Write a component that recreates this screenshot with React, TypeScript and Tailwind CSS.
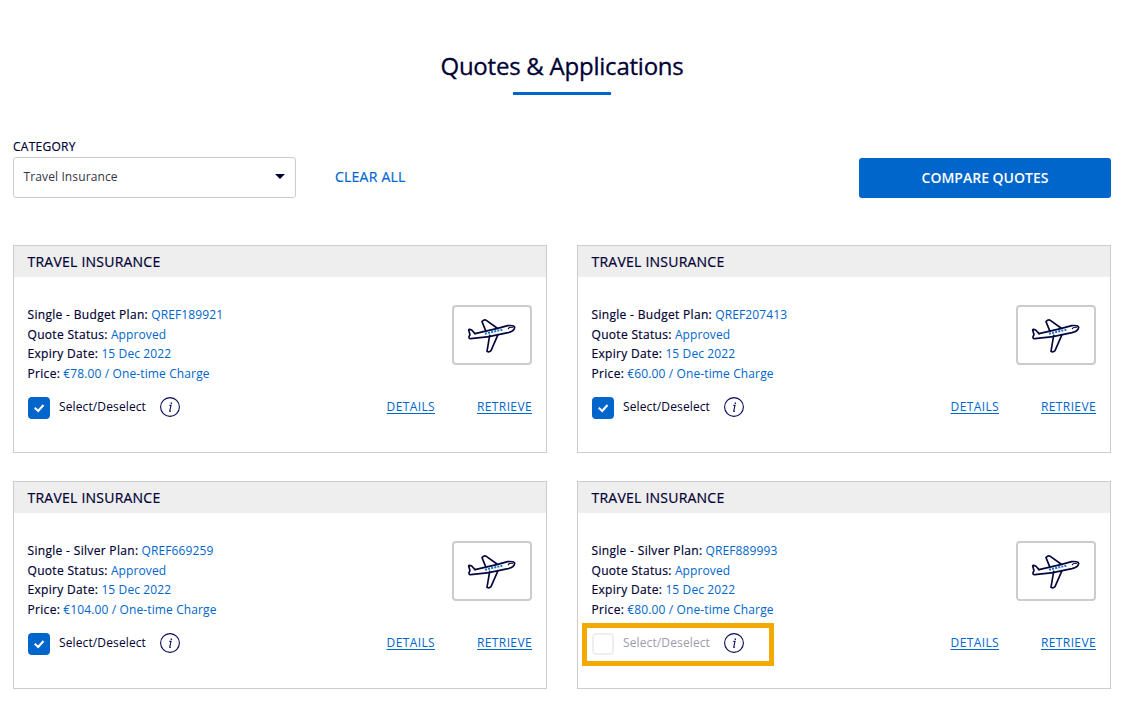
type Quote = { plan: string; reference: string; price: string; selected: boolean };

const quotes: Quote[] = [
  { plan: "Single - Budget Plan:", reference: "QREF189921", price: "€78.00", selected: true },
  { plan: "Single - Budget Plan:", reference: "QREF207413", price: "€60.00", selected: true },
  { plan: "Single - Silver Plan:", reference: "QREF669259", price: "€104.00", selected: true },
  { plan: "Single - Silver Plan:", reference: "QREF889993", price: "€80.00", selected: false },
];

function PlaneIcon() {
  return (
    <svg width="50" height="38" viewBox="66 51 150 114" className="mt-0.5" fill="none" stroke="#06063c" strokeWidth="5" strokeLinecap="round" strokeLinejoin="round">
      <path d="M90 101 L80 90 Q72 86 71 90 L75 104 L72 110 Q71 117 77 116 L133 110" />
      <path d="M90 101 L155 86 L188 77 Q207 75 209 82 Q208 93 189 98 L135 109" />
      <path d="M122 92 L111 65 Q118 57 124 61 L156 84" />
      <path d="M134 106 L126 154 Q132 158 138 152 L159 104" />
      <path d="M190 86 Q192 81 202 82" strokeWidth="3.5" />
      <path d="M120 101 L172 89" stroke="#1672cf" strokeWidth="6" strokeLinecap="butt" strokeDasharray="6 3.5" />
    </svg>
  );
}

function InfoIcon() {
  return (
    <svg width="20" height="20" viewBox="0 0 20 20" className="ml-3.5 shrink-0" fill="none" stroke="#06065c">
      <circle cx="10" cy="10" r="9.4" strokeWidth="1.1" />
      <path d="M9.4 8.4 H11 L9.7 14.2 H11" strokeWidth="1.1" />
      <path d="M11.5 5.5 L11.2 6.8" strokeWidth="1.4" />
    </svg>
  );
}

function Detail({ label, value }: { label: string; value: string }) {
  return (
    <p>
      <span className="tracking-[0.32px] [-webkit-text-stroke:0.18px]">{label}</span> <span className="tracking-[0.12px] text-[#0066cc]">{value}</span>
    </p>
  );
}

function QuoteCard({ quote }: { quote: Quote }) {
  return (
    <article className="h-52 border border-[#cccccc]">
      <h2 className="h-[31px] bg-[#eeeeee] pl-[13.5px] text-sm leading-[31px] tracking-[0.23px] [-webkit-text-stroke:0.2px]">TRAVEL INSURANCE</h2>
      <div className="flex justify-between pr-3.5 pl-[13.5px] pt-7">
        <div className="text-[12px] leading-[19.6px]">
          <Detail label={quote.plan} value={quote.reference} />
          <Detail label="Quote Status:" value="Approved" />
          <Detail label="Expiry Date:" value="15 Dec 2022" />
          <Detail label="Price:" value={`${quote.price} / One-time Charge`} />
        </div>
        <div className="flex h-[60px] w-20 items-center justify-center rounded border-2 border-[#cccccc]">
          <PlaneIcon />
        </div>
      </div>
      <div className="mt-[3.6px] flex items-start justify-between pr-3.5 pl-1 text-[12px]">
        <div className={`flex h-[43px] w-48 items-center border-[5px] pb-[3px] pl-[5px] ${quote.selected ? "border-transparent" : "border-[#f2a900]"}`}>
          <div className={`mt-0.5 flex size-[22px] shrink-0 items-center justify-center rounded ${quote.selected ? "bg-[#0066cc]" : "border-2 border-[#eeeeee]"}`}>
            {quote.selected && (
              <svg width="12" height="10" viewBox="0 0 12 10" fill="none" stroke="white" strokeWidth="2">
                <path d="M1.7 4.7 L5.2 8 L10.5 2" />
              </svg>
            )}
          </div>
          <span className={`ml-[9px] tracking-[0.12px] ${quote.selected ? "" : "text-[#9c9cab]"}`}>Select/Deselect</span>
          <InfoIcon />
        </div>
        <div className="flex gap-[42px] pt-2.5 leading-5 tracking-[0.38px] text-[#0066cc]">
          <a className="underline underline-offset-2" href="#details">DETAILS</a>
          <a className="underline underline-offset-2" href="#retrieve">RETRIEVE</a>
        </div>
      </div>
    </article>
  );
}

export default function App() {
  return (
    <main className="h-[706px] w-[1126px] overflow-hidden bg-white pr-[15px] pl-[13px] font-['Open_Sans',sans-serif] text-[#000033]">
      <header className="flex flex-col items-center pt-[50px]">
        <h1 className="text-2xl leading-8 tracking-[-0.23px] [-webkit-text-stroke:0.3px]">Quotes &amp; Applications</h1>
        <div className="mt-2.5 h-[3px] w-[98px] bg-[#0066cc]" />
      </header>
      <div className="mt-[43px] text-[12px] leading-[18px] tracking-[0.25px] [-webkit-text-stroke:0.18px]">CATEGORY</div>
      <div className="mt-px flex h-[41px] items-center">
        <button className="flex h-[41px] w-[283px] items-center justify-between rounded-[3px] border border-[#cccccc] pr-2.5 pb-0.5 pl-[9.5px] text-[12px] tracking-[0.12px] text-[#333344]">
          Travel Insurance
          <svg width="10" height="5" viewBox="0 0 10 5" fill="#000033"><path d="M0 0H10L5 5Z" /></svg>
        </button>
        <button className="mb-0.5 ml-[39px] text-sm tracking-[0.23px] text-[#0066cc] [-webkit-text-stroke:0.2px]">CLEAR ALL</button>
        <button className="mt-px ml-auto h-10 w-[252px] rounded-[3px] bg-[#0066cc] text-sm font-semibold text-white">COMPARE QUOTES</button>
      </div>
      <section className="mt-[47px] grid grid-cols-2 gap-x-[30px] gap-y-7">
        {quotes.map((quote) => <QuoteCard key={quote.reference} quote={quote} />)}
      </section>
    </main>
  );
}
